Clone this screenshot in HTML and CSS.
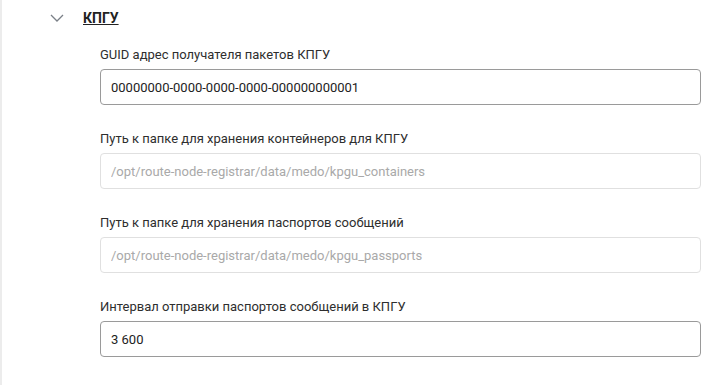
FILE: index.html
```html
<!DOCTYPE html>
<html lang="ru">
<head>
    <meta charset="UTF-8">
    <title>КПГУ</title>
    <link rel="stylesheet" href="styles.css">
</head>
<body>
    <div class="panel">
        <!-- Section header -->
        <div class="section-head">
            <svg class="chevron" width="14" height="8" viewBox="0 0 14 8">
                <path d="M1 1 L7 7 L13 1" fill="none" stroke="#7a7f87" stroke-width="1.3"/>
            </svg>
            <a href="#" class="section-title">КПГУ</a>
        </div>

        <div class="fields">
            <div class="field">
                <label for="guid">GUID адрес получателя пакетов КПГУ</label>
                <input type="text" id="guid" value="00000000-0000-0000-0000-000000000001">
            </div>
            <div class="field">
                <label for="containers">Путь к папке для хранения контейнеров для КПГУ</label>
                <input type="text" id="containers" placeholder="/opt/route-node-registrar/data/medo/kpgu_containers" disabled>
            </div>
            <div class="field">
                <label for="passports">Путь к папке для хранения паспортов сообщений</label>
                <input type="text" id="passports" placeholder="/opt/route-node-registrar/data/medo/kpgu_passports" disabled>
            </div>
            <div class="field">
                <label for="interval">Интервал отправки паспортов сообщений в КПГУ</label>
                <input type="text" id="interval" value="3 600">
            </div>
        </div>
    </div>
</body>
</html>
```

FILE: styles.css
```css
* {
    margin: 0;
    padding: 0;
    box-sizing: border-box;
}

body {
    font-family: Roboto, "Liberation Sans", sans-serif;
    font-size: 13px;
    color: #333;
    background: #fff;
}

.panel {
    min-height: 385px;
    border-left: 2px solid #ececec;
    padding-top: 10px;
}

.section-head {
    display: flex;
    align-items: center;
    height: 16px;
    padding-left: 48px;
}

.chevron {
    display: block;
}

.section-title {
    margin-left: 19px;
    font-size: 14px;
    font-weight: 700;
    color: #222;
    text-decoration: underline;
    line-height: 16px;
}

.fields {
    display: flex;
    flex-direction: column;
    gap: 26px;
    margin-top: 21px;
    padding-left: 98px;
    width: 699px;
}

.field {
    display: flex;
    flex-direction: column;
    gap: 6px;
}

label {
    line-height: 16px;
    color: #2e2e2e;
}

input {
    height: 36px;
    padding: 0 10px;
    border: 1px solid #9a9a9a;
    border-radius: 4px;
    font-family: inherit;
    font-size: 13px;
    color: #222;
    background: #fff;
}

input:disabled {
    border-color: #e0e0e0;
    background: #fff;
}

input::placeholder {
    color: #a9a9a9;
}
```
